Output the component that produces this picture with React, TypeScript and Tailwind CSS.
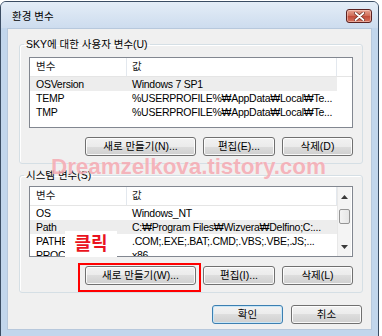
import React from 'react';

type Row = [string, string];

function Btn({ label, w, def }: { label: string; w: string; def?: boolean }) {
  return (
    <div
      className={`${w} h-[19px] flex items-center justify-center rounded-[3px] border text-[10.5px] leading-none text-black bg-[linear-gradient(#f2f2f2_0%,#ebebeb_50%,#dddddd_50%,#cfcfcf_100%)] ${
        def
          ? 'border-[#3c7fb1] shadow-[inset_0_0_0_1px_#c8e6f7]'
          : 'border-[#707070] shadow-[inset_0_0_0_1px_rgba(255,255,255,0.85)]'
      }`}
    >
      {label}
    </div>
  );
}

function ScrollBar() {
  return (
    <div className="w-[14px] shrink-0 mr-px bg-[#f4f4f4] border-l border-[#e8e8e8] flex flex-col">
      <div className="h-[19px] flex items-center justify-center">
        <svg width="7" height="4" viewBox="0 0 7 4">
          <path d="M3.5 0 L7 4 L0 4 Z" fill="#3a3a3a" />
        </svg>
      </div>
      <div className="mt-[3px] h-[15px] mx-px rounded-[2px] border border-[#959595] bg-[linear-gradient(90deg,#f3f3f3,#e6e6e6)]" />
      <div className="flex-1" />
      <div className="h-[18px] flex items-center justify-center">
        <svg width="7" height="4" viewBox="0 0 7 4">
          <path d="M0 0 L7 0 L3.5 4 Z" fill="#3a3a3a" />
        </svg>
      </div>
    </div>
  );
}

function ListView({ rows, selected, scroll }: { rows: Row[]; selected: number; scroll?: boolean }) {
  return (
    <div className="h-[71px] border border-[#828790] bg-white flex overflow-hidden">
      <div className="flex-1 flex flex-col min-w-0">
        <div className="h-[19px] flex shrink-0 border-b border-[#e5e5e5] text-[10.5px] text-[#1a1a1a]">
          <div className="w-[97px] border-r border-[#e3e8ee] pl-[6px] flex items-center">변수</div>
          <div className="w-[210px] border-r border-[#e3e8ee] pl-[5px] flex items-center">값</div>
          <div className="flex-1" />
        </div>
        {rows.map((r, i) => (
          <div
            key={i}
            className={`h-[14px] w-[307px] flex shrink-0 text-[10.5px] leading-[14px] text-black tracking-[-0.25px] ${
              i === selected ? 'bg-[#ededed]' : ''
            }`}
          >
            <div className="w-[97px] pl-[6px] overflow-hidden whitespace-nowrap">{r[0]}</div>
            <div className="w-[210px] pl-[5px] overflow-hidden whitespace-nowrap">{r[1]}</div>
          </div>
        ))}
      </div>
      {scroll && <ScrollBar />}
    </div>
  );
}

function Group({
  title,
  rows,
  selected,
  scroll,
  btns,
  pt,
  mt,
}: {
  title: string;
  rows: Row[];
  selected: number;
  scroll?: boolean;
  btns: [string, string, string];
  pt: string;
  mt: string;
}) {
  return (
    <fieldset className={`${mt} border border-[#d5dfe5] rounded-[3px] shadow-[inset_1px_1px_0_#ffffff]`}>
      <legend className="ml-[4px] px-[2px] text-[10.5px] leading-[14px] text-black">{title}</legend>
      <div className={`${pt} px-[9px] pb-[7px] flex flex-col`}>
        <ListView rows={rows} selected={selected} scroll={scroll} />
        <div className="mt-[9px] flex justify-end gap-[7px]">
          <Btn label={btns[0]} w="w-[111px]" />
          <Btn label={btns[1]} w="w-[72px]" />
          <Btn label={btns[2]} w="w-[71px]" />
        </div>
      </div>
    </fieldset>
  );
}

export default function App() {
  const userRows: Row[] = [
    ['OSVersion', 'Windows 7 SP1'],
    ['TEMP', '%USERPROFILE%₩AppData₩Local₩Te...'],
    ['TMP', '%USERPROFILE%₩AppData₩Local₩Te...'],
  ];
  const sysRows: Row[] = [
    ['OS', 'Windows_NT'],
    ['Path', 'C:₩Program Files₩Wizvera₩Delfino;C:...'],
    ['PATHEXT', '.COM;.EXE;.BAT;.CMD;.VBS;.VBE;.JS;...'],
    ['PROCESSOR', 'x86'],
  ];
  return (
    <div className="relative w-[382px] h-[336px] overflow-hidden bg-white pt-px font-['Liberation_Sans','Noto_Sans_CJK_KR',sans-serif]">
      <div className="w-[379px] h-[340px] rounded-t-[6px] border border-[#3b4d63] bg-[#c2d6ec] flex flex-col">
        <div className="h-[26px] shrink-0 rounded-t-[5px] bg-[linear-gradient(#e4edf7,#cddcee)] flex items-start justify-between px-[6px]">
          <div className="pl-[5px] pt-[7px] text-[10.5px] leading-[14px] text-black">환경 변수</div>
          <div className="mt-[7px] w-[26px] h-[14px] rounded-[3px] border border-[#5a2222] bg-[linear-gradient(#e8a493,#cf6a55_50%,#bf4a38_50%,#d7735e)] flex items-center justify-center shadow-[inset_0_0_0_1px_rgba(255,220,210,0.5)]">
            <svg width="11" height="9" viewBox="0 0 11 9">
              <path d="M1.5 1 L9.5 8 M9.5 1 L1.5 8" stroke="#6b2a20" strokeWidth="3.2" strokeLinecap="round" />
              <path d="M1.5 1 L9.5 8 M9.5 1 L1.5 8" stroke="#ffffff" strokeWidth="1.8" strokeLinecap="round" />
            </svg>
          </div>
        </div>
        <div className="mx-[6px] h-[302px] shrink-0 bg-[#f0f0f0] border border-[#b7c8dc] pt-[8px] pl-[11px] pr-[8px] flex flex-col">
          <Group
            title="SKY에 대한 사용자 변수(U)"
            rows={userRows}
            selected={0}
            btns={['새로 만들기(N)...', '편집(E)...', '삭제(D)']}
            pt="pt-[6px]"
            mt="mt-0"
          />
          <Group
            title="시스템 변수(S)"
            rows={sysRows}
            selected={1}
            scroll
            btns={['새로 만들기(W)...', '편집(I)...', '삭제(L)']}
            pt="pt-[4px]"
            mt="mt-[4px]"
          />
          <div className="mt-[12px] flex justify-end gap-[8px] pr-px">
            <Btn label="확인" w="w-[71px]" def />
            <Btn label="취소" w="w-[71px]" />
          </div>
        </div>
      </div>

      <div className="absolute left-[51px] top-[154px] text-[22.5px] leading-[26px] font-bold text-[#f5aab2] opacity-85 whitespace-nowrap tracking-[-0.1px] [text-shadow:0_0_1px_#fff]">
        Dreamzelkova.tistory.com
      </div>
      <div className="absolute left-[65px] top-[231px] w-[52px] h-[26px] bg-white flex items-center justify-center text-[18px] font-bold text-[#ea1320] leading-none">
        클릭
      </div>
      <div className="absolute left-[78px] top-[263px] w-[123px] h-[29px] border-2 border-[#ff0000]" />
    </div>
  );
}
